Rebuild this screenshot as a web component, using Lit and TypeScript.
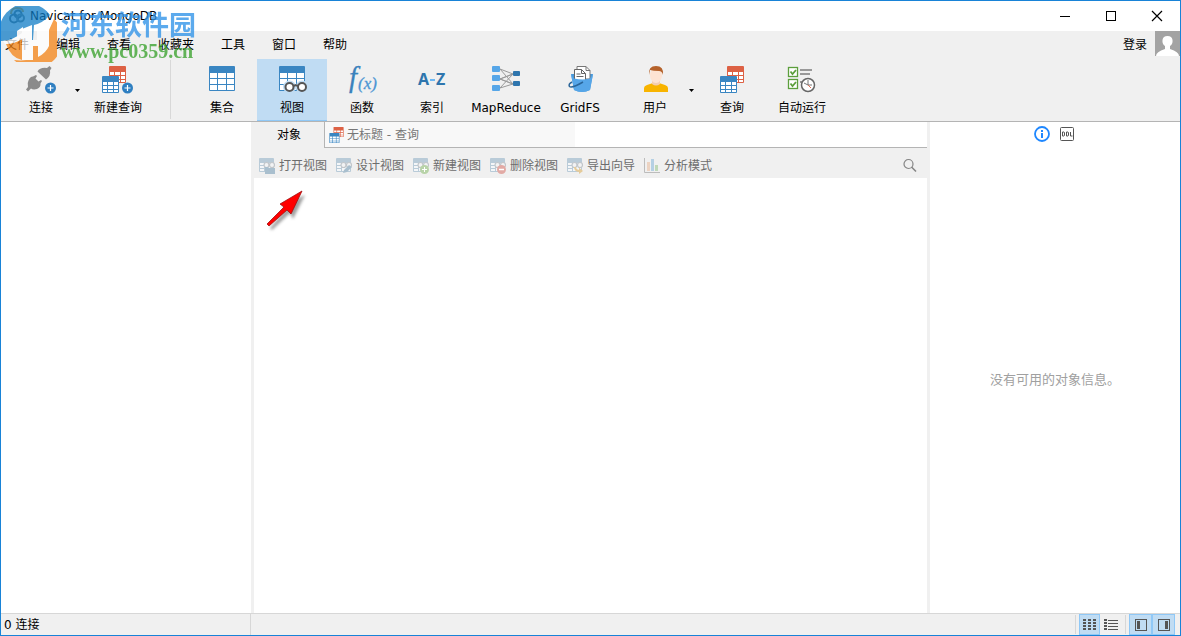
import { LitElement, html, svg, css } from "lit";
import { customElement, property, state } from "lit/decorators.js";

/* ---------- shared icon parts ---------- */

const miniTable = (x: number, y: number, c: string) => svg`
  <g transform="translate(${x} ${y})">
    <rect width="17" height="17" rx="1" fill=${c} />
    <path fill="#fff" d="M1 6h4v3H1zM6 6h5v3H6zM12 6h4v3h-4zM1 10h4v3H1zM6 10h5v3H6zM12 10h4v3h-4zM1 14h4v2H1zM6 14h5v2H6zM12 14h4v2h-4z" />
  </g>`;

const plusBadge = svg`
  <circle cx="27.5" cy="23" r="5.5" fill="#2f7fc1" />
  <path d="M27.500 20v6M24.500 23h6" stroke="#fff" stroke-width="1.200" />`;

const bigTable = svg`
  <rect x="5" y="1" width="26" height="25" rx="1" fill="#3a86c2" />
  <path fill="#fff" d="M6 8h7v5H6zM14 8h8v5h-8zM23 8h7v5h-7zM6 14h7v5H6zM14 14h8v5h-8zM23 14h7v5h-7zM6 20h7v5H6zM14 20h8v5h-8zM23 20h7v5h-7z" />`;

const bigIcons: Record<string, unknown> = {
  connect: svg`
    <g fill="#8b8b8b">
      <path d="M14.500 6.500Q17 2 24 3L26.500 1 28.500 3 27 5.500Q28 11 23 14.500z" />
      <path d="M5.500 15.500Q7 11.500 10 11.500L13 10 14 11 12.500 13.500 15.500 16.500 18 15 19 16 17.500 18.500Q18 22 14 24 10 25 8 23.500L5 26.500 3 24.500 5 22Q4 18 5.500 15.500z" />
    </g>${plusBadge}`,
  newQuery: svg`${miniTable(9, 1, "#dd6144")}${miniTable(2, 11, "#3a86c2")}${plusBadge}`,
  table: bigTable,
  view: svg`${bigTable}
    <g stroke="#c0dcf3" stroke-width="5" fill="none"><circle cx="15.500" cy="22" r="4" /><circle cx="28" cy="22" r="4" /></g>
    <g stroke="#555" stroke-width="2" fill="#fff"><circle cx="15.500" cy="22" r="4" /><circle cx="28" cy="22" r="4" /><path d="M19.500 21q2-1.500 4.500 0" fill="none" /></g>`,
  fn: svg`
    <text x="5" y="22" font-family="Liberation Serif, serif" font-style="italic" font-size="29" fill="#3a82bc" stroke="#3a82bc" stroke-width=".3">f</text>
    <text x="14" y="24" font-family="Liberation Serif, serif" font-style="italic" font-size="17" fill="#4b95d3" stroke="#4b95d3" stroke-width=".3">(x)</text>`,
  index: svg`
    <g font-family="Noto Sans, sans-serif" font-weight="700" font-size="16" fill="#2e75ad">
      <text x="4" y="20">A</text><text x="22" y="20">Z</text>
    </g><path d="M16 15h5" stroke="#6db7f2" stroke-width="2" />`,
  mapReduce: svg`
    <path d="M12 4 25 9 12 14 25 19 12 23 25 9M12 4 25 19M12 14 25 9M12 14 25 19" stroke="#9a9a9a" fill="none" />
    <g fill="#56a6e8"><rect x="4" y="1" width="8" height="6" rx="1" /><rect x="4" y="10" width="8" height="6" rx="1" /><rect x="4" y="20" width="8" height="6" rx="1" /></g>
    <g fill="#2e75ad"><rect x="25" y="6" width="7" height="5" rx="1" /><rect x="25" y="16" width="7" height="5" rx="1" /></g>`,
  gridfs: svg`
    <path d="M9 9h22l-3 16q-8 4-16 0z" fill="#4a98d8" />
    <path d="M15 1.500h9l4 4V14H15z" fill="#fff" stroke="#777" /><path d="M24 1.500v4h4" fill="none" stroke="#777" />
    <path d="M12.500 4.500h7l4 4V16h-11z" fill="#fff" stroke="#666" /><path d="M19.500 4.500v4h4M14.500 9h4M14.500 11.500h7" stroke="#666" fill="none" />
    <path d="M9 9l3 4.500q9 2 16 0L31 9 28 25q-8 4-16 0z" fill="#56a6e8" />
    <path d="M10 17q-4 2-2.500 4.500Q10 23.500 21 17" stroke="#2a6599" stroke-width="1.500" fill="none" />`,
  user: svg`
    <path d="M7 27v-4q0-2 3-3l6-2h6l6 2q3 1 3 3v4z" fill="#f8b400" />
    <path d="M15 15h8v4q-4 3-8 0z" fill="#f3cdb0" />
    <ellipse cx="19" cy="10.500" rx="6" ry="7.500" fill="#fde3d3" />
    <path d="M12 10Q11 1 19 1t7 9q-1-4-4-4-6 0-9-1z" fill="#b5622b" />`,
  query: svg`${miniTable(13, 1, "#dd6144")}${miniTable(6, 11, "#3a86c2")}`,
  auto: svg`
    <g fill="#fff" stroke="#5c9f3c" stroke-width="1.300"><rect x="4.500" y="2.500" width="9" height="9" /><rect x="4.500" y="14.500" width="9" height="9" /></g>
    <path d="M6.500 6.500 8.500 9l3.500-4M6.500 18.500l2 2.500 3.500-4" stroke="#5c9f3c" stroke-width="1.800" fill="none" />
    <path d="M16 5h12M16 9h10M16 17h3" stroke="#999" stroke-width="2" />
    <circle cx="24" cy="20" r="6.500" fill="#fff" stroke="#666" stroke-width="1.500" />
    <path d="M24 15v5h4M24 20l-4-2" stroke="#777" fill="none" /><path d="M24 20l3 3" stroke="#e06b50" />`,
};

const fadedTable = svg`
  <rect x="0" y="0" width="15" height="14" rx="1" fill="#b9cbd8" />
  <path fill="#f4f6f8" d="M1 5h4v2H1zM1 8h4v2H1zM1 11h4v2H1zM6 5h8v8H6z" />
  <g fill="#f2f3f4" stroke="#c2c6ca" stroke-width="1.200"><circle cx="7.500" cy="7" r="2.500" /><circle cx="13" cy="7" r="2.500" /></g>`;

const smallIcons: Record<string, unknown> = {
  open: svg`${fadedTable}<path d="M6 9h3l1 1h6v6H6z" fill="#a9bfce" />`,
  design: svg`${fadedTable}<path d="M7 15l1-3 5-5 3 2-5 5z" fill="#a9bfce" />`,
  add: svg`${fadedTable}<circle cx="11.500" cy="11.500" r="4.500" fill="#b8d3a8" /><path d="M11.500 9v5M9 11.500h5" stroke="#fff" />`,
  remove: svg`${fadedTable}<circle cx="11.500" cy="11.500" r="4.500" fill="#e2aaa5" /><path d="M9 11.500h5" stroke="#fff" stroke-width="1.500" />`,
  wizard: svg`${fadedTable}<path d="M8 9q0 4 5 4" stroke="#e5cb9a" stroke-width="2" fill="none" /><path d="M12 9.500l4 3.500-4 3z" fill="#e5cb9a" />`,
  analyze: svg`<path d="M.5 0v14.500H16" stroke="#bcbcbc" fill="none" /><path d="M3 4h3v9H3z" fill="#ecd3c2" /><path d="M7 1h3v12H7z" fill="#b5d0e4" /><path d="M11 7h3v6h-3z" fill="#bfd8b8" />`,
};

/* ---------- large toolbar button ---------- */

@customElement("tool-button")
class ToolButton extends LitElement {
  @property() label = "";
  @property() icon = "";
  @property({ type: Boolean }) active = false;

  static styles = css`
    :host { display: block; }
    button {
      width: 100%; height: 100%; box-sizing: border-box; border: 0; margin: 0;
      padding: 6px 0 0; background: none; color: #000;
      font: 12px/16px "DejaVu Sans", "Noto Sans CJK SC", sans-serif;
      display: flex; flex-direction: column; align-items: center; gap: 7px;
      white-space: nowrap;
    }
    .active { background: #c0dcf3; border-bottom: 1px solid #90c8f6; }
    svg { display: block; overflow: visible; flex: none; }
  `;

  render() {
    return html`<button class=${this.active ? "active" : ""} aria-pressed=${this.active}>
      <svg width="36" height="28" viewBox="0 0 36 28" aria-hidden="true">${bigIcons[this.icon]}</svg>
      <span>${this.label}</span>
    </button>`;
  }
}

/* ---------- translucent site logo over the header ---------- */

@customElement("site-mark")
class SiteMark extends LitElement {
  static styles = css`
    :host { display: flex; gap: 4px; align-items: flex-start; pointer-events: none; }
    svg { display: block; opacity: .74; }
    .words { display: flex; flex-direction: column; gap: 2px; padding-top: 4px; opacity: .78; white-space: nowrap; }
    .cn { font: 700 27px/28px "Noto Sans CJK SC", sans-serif; color: #2f93e8; }
    .url { font: 700 20px/22px "Liberation Serif", serif; color: #3ba22e; }
  `;

  render() {
    return html`
      <svg width="56" height="56" viewBox="0 0 56 56" aria-hidden="true">
        <path d="M0 35A28 28 0 0 1 49 9Q42 17 33 19L32 34H22V21L16 25V31Q10 35 0 35z" fill="#0f7cc6" />
        <path d="M53 13A28 28 0 0 1 13 54Q30 56 39 48 48 40 48 24z" fill="#f58212" />
        <path d="M5 38Q14 37 21 33V54Q10 52 5 38z" fill="#f58212" />
        <path d="M32 40h5v10q-2 3-5 3z" fill="#f58212" />
        <path d="M21 23l10-4v15h5V24Q45 22 52 12L48 22V40q-3 7-11 11V40h-5v14H21V33Q14 38 4 38L2 35Q12 34 21 27z" fill="#fff" />
      </svg>
      <div class="words"><span class="cn">河东软件园</span><span class="url">www.pc0359.cn</span></div>`;
  }
}

/* ---------- application window ---------- */

@customElement("app-root")
class AppRoot extends LitElement {
  @state() private current = "view";

  static styles = css`
    :host {
      display: flex; flex-direction: column; position: relative;
      height: 100vh; box-sizing: border-box; overflow: hidden;
      border: 1px solid #1883d7; background: #fff; color: #000;
      font: 12px/16px "DejaVu Sans", "Noto Sans CJK SC", sans-serif;
    }
    button { border: 0; margin: 0; padding: 0; background: none; font: inherit; color: inherit; white-space: nowrap; }
    svg { display: block; flex: none; overflow: visible; }

    .title { display: flex; align-items: center; flex: none; height: 30px; padding-left: 7px; gap: 4px; }
    .title h1 { flex: 1; margin: 0; font: inherit; }
    .caption { display: flex; height: 100%; margin-left: auto; }
    .caption button { width: 46px; display: grid; place-items: center; }

    .menu { display: flex; align-items: flex-start; flex: none; height: 28px; padding-left: 4px; background: #f0f0f0; }
    .menu nav { display: flex; gap: 27px; flex: 1; }
    .menu nav button, .login { height: 28px; }
    .login { margin-right: 8px; }

    .tools { display: flex; flex: none; height: 62px; padding-left: 10px; background: #f0f0f0; border-bottom: 1px solid #b4b4b4; }
    .narrow { width: 60px; }
    .normal { width: 70px; }
    .wide { width: 78px; }
    .caret { width: 12px; display: grid; place-items: center; }
    .divider { width: 1px; margin: 1px 16px 2px 17px; background: #d8d8d8; }
    .space { width: 10px; }

    .body { display: grid; grid-template-columns: 250px 3px minmax(0, 1fr) 3px 250px; flex: 1; min-height: 0; }
    .splitter { background: #f0f0f0; }
    .center { display: flex; flex-direction: column; min-width: 0; }
    .tabs { display: flex; flex: none; height: 26px; }
    .tab-active { width: 70px; background: #f0f0f0; }
    .tab-rest { flex: 1; display: flex; border-left: 1px solid #b4b4b4; border-bottom: 1px solid #b4b4b4; }
    .tab { width: 250px; padding-left: 4px; display: flex; align-items: center; gap: 3px; background: #f8f8f8; color: #777; }
    .actions { display: flex; align-items: center; flex: none; height: 30px; box-sizing: border-box; padding: 5px 10px 0 5px; gap: 9px; background: #f0f0f0; color: #6d6d6d; }
    .actions button { display: flex; align-items: center; gap: 4px; }
    .actions .search { margin-left: auto; }

    .info { display: flex; flex-direction: column; }
    .info-head { display: flex; justify-content: center; align-items: center; gap: 10px; flex: none; height: 24px; padding-right: 2px; }
    .empty { flex: 1; display: grid; place-items: center; color: #a0a0a0; font-size: 13px; line-height: 18px; }
    .empty p { margin: 0; }

    .status { display: flex; flex: none; height: 21px; border-top: 1px solid #d7d7d7; background: #f0f0f0; }
    .status .count { width: 250px; box-sizing: border-box; padding: 3px 0 0 3px; border-right: 1px solid #d7d7d7; }
    .switches { display: flex; margin-left: auto; padding-right: 5px; }
    .switches button { width: 21px; display: grid; place-items: center; box-sizing: border-box; border: 1px solid transparent; }
    .switches .pane { width: 23px; }
    .switches .on { background: #c0dcf3; border-color: #90c8f6; }
    .switches i { width: 1px; margin: 1px 3px 1px 4px; background: #d7d7d7; }

    .mark { position: absolute; left: 0; top: 5px; z-index: 2; }
    .pointer { position: absolute; left: 261px; top: 186px; z-index: 2; }
  `;

  private tool(id: string, label: string, size = "normal") {
    return html`<tool-button class=${size} icon=${id} label=${label}
      ?active=${this.current === id} @click=${() => (this.current = id)}></tool-button>`;
  }

  private caret(label: string) {
    return html`<button class="caret" aria-label=${label}>
      <svg width="5" height="3" viewBox="0 0 5 3"><path d="M0 0h5L2.500 3z" /></svg>
    </button>`;
  }

  render() {
    const menus = ["文件", "编辑", "查看", "收藏夹", "工具", "窗口", "帮助"];
    const actions = [
      ["open", "打开视图"], ["design", "设计视图"], ["add", "新建视图"],
      ["remove", "删除视图"], ["wizard", "导出向导"], ["analyze", "分析模式"],
    ];
    return html`
      <header class="title">
        <svg width="18" height="18" viewBox="0 0 18 18" aria-hidden="true">
          <g fill="none" stroke-width="2"><path d="M3 7Q3 1 9 1t6 4" stroke="#e7a52e" /><circle cx="10" cy="7" r="3.500" stroke="#60737c" /><circle cx="6" cy="11.500" r="4" stroke="#60737c" /><circle cx="12.500" cy="11" r="3.500" stroke="#76888e" /></g>
        </svg>
        <h1>Navicat for MongoDB</h1>
        <div class="caption">
          <button aria-label="最小化"><svg width="10" height="10"><path d="M0 5.500h10" stroke="#000" /></svg></button>
          <button aria-label="最大化"><svg width="10" height="10"><rect x=".5" y=".5" width="9" height="9" fill="none" stroke="#000" /></svg></button>
          <button aria-label="关闭"><svg width="10" height="10"><path d="M0 0l10 10M10 0 0 10" stroke="#000" stroke-width="1.200" /></svg></button>
        </div>
      </header>

      <div class="menu">
        <nav>${menus.map((m) => html`<button>${m}</button>`)}</nav>
        <button class="login">登录</button>
        <svg width="25" height="25" viewBox="0 0 25 25" aria-hidden="true">
          <rect width="25" height="25" fill="#a3a3a3" />
          <path d="M1 25q0-4 9-7v-3q-3-2-2.500-6 .5-4 5-4t5 4q.5 4-2.500 6v3q9 3 9 7z" fill="#fff" />
        </svg>
      </div>

      <div class="tools" role="toolbar">
        ${this.tool("connect", "连接", "narrow")}${this.caret("连接选项")}
        ${this.tool("newQuery", "新建查询")}
        <div class="divider"></div>
        ${this.tool("table", "集合")}${this.tool("view", "视图")}${this.tool("fn", "函数")}
        ${this.tool("index", "索引")}${this.tool("mapReduce", "MapReduce", "wide")}
        ${this.tool("gridfs", "GridFS")}
        <div class="space"></div>
        ${this.tool("user", "用户", "narrow")}${this.caret("用户选项")}
        ${this.tool("query", "查询")}${this.tool("auto", "自动运行")}
      </div>

      <main class="body">
        <aside></aside>
        <div class="splitter"></div>
        <section class="center">
          <div class="tabs" role="tablist">
            <button class="tab-active" role="tab" aria-selected="true">对象</button>
            <div class="tab-rest">
              <button class="tab" role="tab" aria-selected="false">
                <svg width="15" height="16" viewBox="6 1 24 27" aria-hidden="true">${bigIcons.query}</svg>
                <span>无标题 - 查询</span>
              </button>
            </div>
          </div>
          <div class="actions">
            ${actions.map(([id, label]) => html`<button>
              <svg width="16" height="16" viewBox="0 0 16 16" aria-hidden="true">${smallIcons[id]}</svg><span>${label}</span>
            </button>`)}
            <button class="search" aria-label="搜索">
              <svg width="14" height="14" viewBox="0 0 14 14"><g fill="none" stroke="#858585" stroke-width="1.200"><circle cx="5.500" cy="5" r="4.500" /><path d="M8.500 8l4.500 4.500" stroke-width="1.600" /></g></svg>
            </button>
          </div>
        </section>
        <div class="splitter"></div>
        <aside class="info">
          <div class="info-head">
            <button aria-label="信息"><svg width="16" height="16"><circle cx="8" cy="8" r="7" fill="none" stroke="#1e87ff" stroke-width="1.800" /><path d="M8 4v2M8 7v5" stroke="#1e87ff" stroke-width="2" /></svg></button>
            <button aria-label="DDL"><svg width="14" height="14"><rect x=".5" y=".5" width="13" height="13" rx="1" fill="none" stroke="#555" /><path d="M2.500 5v4h1.500l.5-.5v-3L4 5zM6.500 5v4h1.500l.5-.5v-3L8 5zM10.500 5v4h2" fill="none" stroke="#555" /></svg></button>
          </div>
          <div class="empty"><p>没有可用的对象信息。</p></div>
        </aside>
      </main>

      <footer class="status">
        <div class="count">0 连接</div>
        <div class="switches">
          <i></i>
          <button class="on" aria-label="图标"><svg width="13" height="11"><path d="M0 1h3M5 1h3M10 1h3M0 4h3M5 4h3M10 4h3M0 7h3M5 7h3M10 7h3M0 10h3M5 10h3M10 10h3" stroke="#555" stroke-width="2" /></svg></button>
          <button aria-label="列表"><svg width="14" height="11"><path d="M0 1h3M0 4h3M0 7h3M0 10h3" stroke="#555" stroke-width="2" /><path d="M4 1.500h10M4 4.500h10M4 7.500h10M4 10.500h10" stroke="#555" /></svg></button>
          <i></i>
          <button class="pane on" aria-label="左侧窗格"><svg width="12" height="12"><rect x=".5" y=".5" width="11" height="11" fill="none" stroke="#555" /><path d="M2 2h3v8H2z" fill="#555" /></svg></button>
          <button class="pane on" aria-label="右侧窗格"><svg width="12" height="12"><rect x=".5" y=".5" width="11" height="11" fill="none" stroke="#555" /><path d="M7 2h3v8H7z" fill="#555" /></svg></button>
        </div>
      </footer>

      <site-mark class="mark"></site-mark>
      <svg class="pointer" width="46" height="46" viewBox="0 0 46 46" aria-hidden="true">
        <defs><filter id="soft" x="-30%" y="-30%" width="160%" height="160%"><feGaussianBlur stdDeviation="1.500" /></filter></defs>
        <path d="M40 5 17 16l5 2L5 38l2 2L25 23l3 6z" transform="translate(3 3)" fill="#777" opacity=".7" filter="url(#soft)" />
        <path d="M40 4 18 17l4 3L5 37l2 2L25 23l4 4z" fill="#f00" stroke="#a01010" stroke-width=".8" />
      </svg>`;
  }
}
